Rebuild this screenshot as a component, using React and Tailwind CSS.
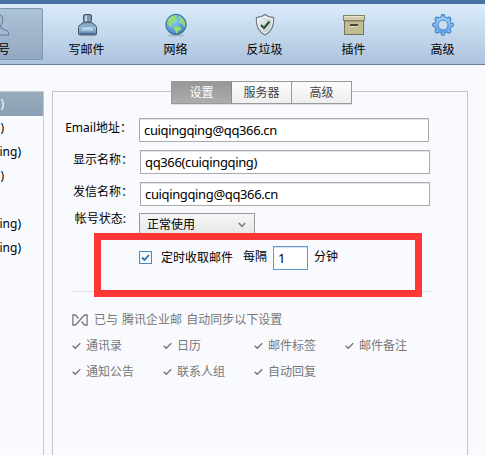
import React from "react";
import clsx from "clsx";

function AccountIcon() {
  return (
    <svg width="24" height="24" viewBox="0 0 24 24">
      <path
        d="M12 1.500c3 0 4.800 2 4.800 5.200c0 2.500-.8 4.300-2 5.800v2.500l6.200 2.800c1 .5 1.500 1.200 1.500 2.200v2H1.500v-2c0-1 .5-1.700 1.500-2.200l6.200-2.800v-2.500c-1.200-1.500-2-3.300-2-5.800c0-3.200 1.800-5.200 4.800-5.200z"
        fill="#a3b8d2"
        stroke="#62758f"
      />
    </svg>
  );
}

function InkIcon() {
  return (
    <svg width="24" height="24" viewBox="0 0 24 24">
      <defs>
        <linearGradient id="ink" x1="0" y1="0" x2="0" y2="1">
          <stop offset="0" stopColor="#7b93ad" />
          <stop offset=".45" stopColor="#9fc0da" />
          <stop offset="1" stopColor="#5b80a6" />
        </linearGradient>
      </defs>
      <path d="M9 9h7l3.500 2.500q2 1.200 2 3v6q0 1.500-1.500 1.500H5q-1.500 0-1.500-1.500v-6q0-1.800 2-3z" fill="url(#ink)" stroke="#40546f" />
      <rect x="8.500" y="1.500" width="8" height="7.500" rx="1.500" fill="#8494ad" stroke="#43526b" />
      <path d="M11 2.500v6" stroke="#c3cede" strokeWidth="2" />
      <rect x="6.500" y="13.500" width="12" height="4.500" fill="#b6d4e8" stroke="#86a9c8" />
      <path d="M5 20.500h15" stroke="#456a92" />
    </svg>
  );
}

function GlobeIcon() {
  return (
    <svg width="24" height="24" viewBox="0 0 24 24">
      <defs>
        <radialGradient id="sea" cx=".4" cy=".3" r=".75">
          <stop offset="0" stopColor="#9ad0f5" />
          <stop offset=".6" stopColor="#5a9fdd" />
          <stop offset="1" stopColor="#3a77b9" />
        </radialGradient>
      </defs>
      <ellipse cx="12" cy="22.500" rx="9" ry="1" fill="#7d94ab" opacity=".45" />
      <circle cx="12" cy="11.500" r="10.200" fill="url(#sea)" stroke="#386797" />
      <path d="M3 10l1.500-4l4-3.200l4-.3l-.5 2.500l1 1.500l-3 1.500l-1 2.500l-2 .5l1.500 2.500l-1.500 1l-2.500-2.500z" fill="#94dd70" />
      <path d="M14.500 3l4 2.200l2.700 4.300l-.2 4.500l-1.800-1l-.7-2.500l-3-.5l-1-2l2-1.500l-2-1.500z" fill="#94dd70" />
      <path d="M9 14.500l3.500-1.500l4 1.500l1 2l-3 1.500l-2 3l-1.500-3.500z" fill="#94dd70" />
    </svg>
  );
}

function ShieldIcon() {
  return (
    <svg width="24" height="24" viewBox="0 0 24 24">
      <defs>
        <linearGradient id="shield" x1="0" y1="0" x2="1" y2="1">
          <stop offset="0" stopColor="#f3f5f6" />
          <stop offset="1" stopColor="#b7c1c9" />
        </linearGradient>
      </defs>
      <path
        d="M12 1.500c2.500 2 5.500 3 8.700 3.200c.3 7.300-1 13.300-8.700 17.300c-7.700-4-9-10-8.700-17.300c3.200-.2 6.200-1.200 8.700-3.200z"
        fill="url(#shield)"
        stroke="#6e7a85"
        strokeWidth="1.200"
      />
      <path d="M12 3.200c2.200 1.500 4.600 2.300 7.300 2.600c.1 6.200-1.200 11.300-7.300 14.700c-6.100-3.400-7.400-8.500-7.300-14.700c2.700-.3 5.100-1.100 7.300-2.600z" fill="none" stroke="#fff" strokeWidth=".8" />
      <path d="M8 12l3 3l5.500-6.500" fill="none" stroke="#22562b" strokeWidth="2" />
    </svg>
  );
}

function BoxIcon() {
  return (
    <svg width="24" height="24" viewBox="0 0 24 24">
      <rect x="2.500" y="7.500" width="19" height="14" fill="#c2bc94" stroke="#77735a" />
      <rect x="1.500" y="2.500" width="21" height="5" fill="#d2cda8" stroke="#858165" />
      <path d="M2 3.500h20" stroke="#e9e5ca" />
      <path d="M3 8.500h18" stroke="#a59f79" />
      <path d="M8 12h8" stroke="#45443a" strokeWidth="2" />
      <path d="M8 13.500h8" stroke="#e0dcbc" />
    </svg>
  );
}

// toothed ring, eight teeth placed by rotation
function GearIcon() {
  return (
    <svg width="24" height="24" viewBox="0 0 24 24">
      <defs>
        <linearGradient id="gear" x1="0" y1="0" x2="0" y2="1">
          <stop offset="0" stopColor="#a5d3fa" />
          <stop offset="1" stopColor="#5a9fe9" />
        </linearGradient>
      </defs>
      <g stroke="#3978bd" strokeWidth="4.800" strokeLinecap="round">
        {[0, 45, 90, 135].map((deg) => (
          <path key={deg} d="M12 3.500v17" transform={`rotate(${deg} 12 12)`} />
        ))}
      </g>
      <circle cx="12" cy="12" r="8.500" fill="#3978bd" />
      <g stroke="#80bbf3" strokeWidth="3" strokeLinecap="round">
        {[0, 45, 90, 135].map((deg) => (
          <path key={deg} d="M12 3.500v17" transform={`rotate(${deg} 12 12)`} />
        ))}
      </g>
      <circle cx="12" cy="12" r="7.800" fill="url(#gear)" />
      <circle cx="12" cy="12" r="5" fill="#c9ddf0" stroke="#4683c5" />
    </svg>
  );
}

function Tick() {
  return (
    <svg width="9" height="8" viewBox="0 0 9 8" className="shrink-0">
      <path d="M.7 3.700L3.200 6.200L8.300 1.200" fill="none" stroke="#777" strokeWidth="1.400" />
    </svg>
  );
}

const toolbar = [
  { label: "号", Icon: AccountIcon, active: true },
  { label: "写邮件", Icon: InkIcon },
  { label: "网络", Icon: GlobeIcon },
  { label: "反垃圾", Icon: ShieldIcon },
  { label: "插件", Icon: BoxIcon },
  { label: "高级", Icon: GearIcon },
];

const accounts = [
  { text: ")", active: true },
  { text: ")" },
  { text: "ing)", wide: true },
  { text: ")" },
  { text: "" },
  { text: "ing)", wide: true },
  { text: "ing)", wide: true },
];

const synced = ["通讯录", "日历", "邮件标签", "邮件备注", "通知公告", "联系人组", "自动回复"];

function Field({ label, value, className }) {
  return (
    <div className={clsx("flex h-6", className)}>
      <span className="-mt-0.5 mr-[7px] flex h-6 w-20 items-center justify-end whitespace-nowrap">{label}</span>
      <input
        type="text"
        defaultValue={value}
        className="h-6 w-[290px] border border-[#aaa] bg-white pb-px pl-1 text-[13px] tracking-[-0.36px] shadow-[inset_0_1px_0_#e3e3e3] outline-none"
      />
    </div>
  );
}

function App() {
  const [checked, setChecked] = React.useState(true);

  return (
    <div className="flex h-[455px] w-[485px] flex-col overflow-hidden bg-[#f9fafe] font-['Noto_Sans','Noto_Sans_CJK_SC',sans-serif] text-[12px] leading-4 text-black">
      <div className="h-1 shrink-0 bg-[#4671a2]" />
      <div className="flex h-[61px] shrink-0 border-b border-[#657f9b] bg-linear-to-b from-[#dbedfb] to-[#adc3dd] pt-1">
        <div className="-ml-[47px] flex">
          {toolbar.map(({ label, Icon, active }) => (
            <button
              key={label}
              className={clsx(
                "flex h-[52px] shrink-0 flex-col items-center pt-[5px]",
                active
                  ? "-mr-px w-[90px] rounded-xs bg-linear-to-b from-[#adc3d8] to-[#93a9c1] shadow-[inset_0_0_0_1px_#7f97b1]"
                  : "w-[89px]"
              )}
            >
              <Icon />
              <span className={clsx("mt-[5px]", active && "ml-3")}>{label}</span>
            </button>
          ))}
        </div>
      </div>

      <div className="flex flex-1 pt-[26px]">
        <div className="w-11 shrink-0 border-r border-t border-[#c6c8cc]">
          {accounts.map((a, i) => (
            <div
              key={i}
              className={clsx("flex h-6 items-center", a.active && "bg-linear-to-b from-[#98abbd] to-[#8ba0b5] text-white")}
            >
              <span className={clsx("flex justify-end", a.wide ? "w-[21px]" : "w-1")}>{a.text}</span>
            </div>
          ))}
        </div>

        <div className="ml-2 flex w-[416px] shrink-0 flex-col border border-b-0 border-[#c2c4c9]">
          <div className="-mt-[11px] ml-[118px] flex h-[23px] w-[181px] border border-[#999] bg-linear-to-b from-[#fbfbfb] to-[#efefef] text-[#444] shadow-[0_1px_0_#dedfe2]">
            <button className="w-[60px] border-r border-[#888] bg-linear-to-b from-[#979797] to-[#adadad] text-white">设置</button>
            <button className="w-[60px] border-r border-[#999]">服务器</button>
            <button className="w-[59px]">高级</button>
          </div>

          <Field label="Email地址：" value="cuiqingqing@qq366.cn" className="-ml-px mt-3.5" />
          <Field label="显示名称：" value="qq366(cuiqingqing)" className="mt-2" />
          <Field label="发信名称：" value="cuiqingqing@qq366.cn" className="mt-2" />

          <div className="mt-[7px] flex h-5">
            <span className="-mt-0.5 w-[73px] text-right">帐号状态:</span>
            <div className="ml-[13px] flex h-[23px] w-[116px] items-center justify-between border border-[#999] bg-linear-to-b from-[#f6f6f6] to-[#e6e6e6] pl-[7px] pr-2">
              <span>正常使用</span>
              <svg width="8" height="6" viewBox="0 0 8 6">
                <path d="M.8 1L4 4.500L7.200 1" fill="none" stroke="#777" strokeWidth="1.500" />
              </svg>
            </div>
          </div>

          <div className="relative ml-[41px] flex h-16 w-[328px] border-[7px] border-[#fd3636] bg-[#f9fafe] pl-[38px] pt-1.5">
            <button
              onClick={() => setChecked(!checked)}
              className="mt-[5px] flex h-[13px] w-[13px] items-center justify-center border border-[#4a88c4] bg-[#f5faff]"
            >
              {checked && (
                <svg width="9" height="9" viewBox="0 0 9 9">
                  <path d="M1 4.500L3.500 7L8 2" fill="none" stroke="#3470ad" strokeWidth="1.800" />
                </svg>
              )}
            </button>
            <span className="ml-[9px] mt-1 whitespace-nowrap">定时收取邮件</span>
            <span className="ml-[10px] mt-[3px] whitespace-nowrap">每隔</span>
            <input
              type="text"
              defaultValue="1"
              className="ml-1.5 h-6 w-[35px] border border-[#5b9bdc] bg-white pb-px pl-1 text-[13px] shadow-[inset_0_1px_0_#dde3ea] outline-none"
            />
            <span className="ml-1.5 mt-[3px] whitespace-nowrap">分钟</span>
          </div>

          <div className="-mt-1.5 ml-[19px] h-px w-[360px] bg-[#dddfe3]" />

          <div className="ml-[19px] mt-5 flex items-center text-[#777]">
            <svg width="16" height="12" viewBox="0 0 16 12">
              <g fill="none" stroke="#777" strokeWidth="1.300">
                <path d="M6.300 4.500L4 1.500Q3.600 1 3 1H.9v10H3q.6 0 1-.5L12 1.500Q12.400 1 13 1h2.100v10H13q-.6 0-1-.5L9.700 7.500" />
              </g>
            </svg>
            <span className="ml-1.5 whitespace-pre [word-spacing:1px]">已与 腾讯企业邮 自动同步以下设置</span>
          </div>

          <div className="ml-[19px] mt-[10px] grid grid-cols-[repeat(4,91px)] gap-y-[10px] text-[#777]">
            {synced.map((name) => (
              <div key={name} className="flex items-center gap-[5px]">
                <Tick />
                <span>{name}</span>
              </div>
            ))}
          </div>
        </div>
      </div>
    </div>
  );
}

export default App;
